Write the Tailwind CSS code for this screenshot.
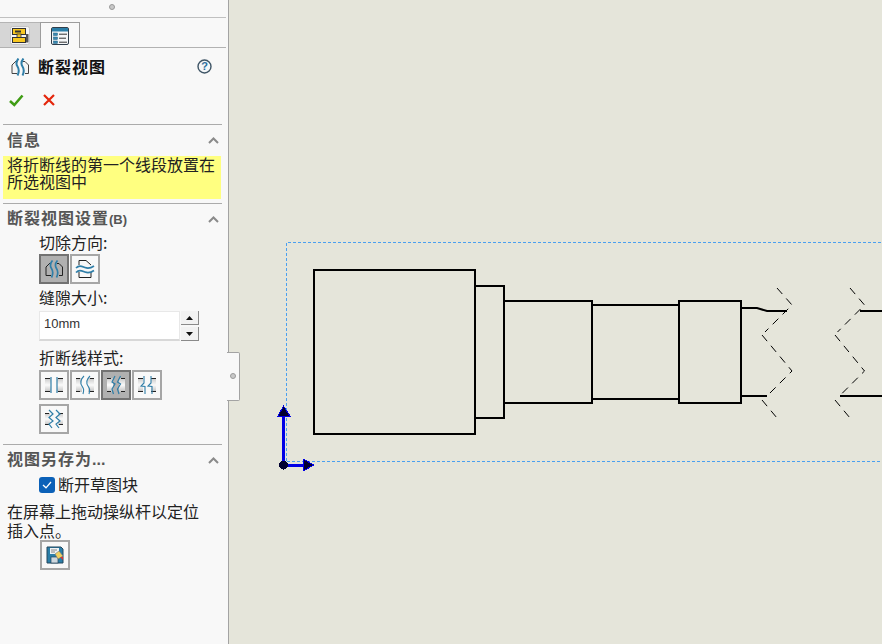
<!DOCTYPE html>
<html lang="zh">
<head>
<meta charset="utf-8">
<script src="https://cdn.jsdelivr.net/npm/@tailwindcss/browser@4"></script>
</head>
<body class="m-0 overflow-hidden">
<div class="flex w-[882px] h-[644px] bg-[#e5e5da] font-['Noto_Sans_CJK_SC','Liberation_Sans',sans-serif] text-[#111] relative overflow-hidden">

  <!-- Property panel -->
  <aside class="w-[229px] h-[644px] shrink-0 bg-[#f8f8f8] border-r border-[#a3a3a3] flex flex-col">
    <div class="h-[18px] shrink-0 mr-[2px] border-b border-[#c0c0c0] flex justify-center pt-[4px]">
      <span class="block w-[6px] h-[6px] rounded-full bg-[#c8c8c8] border border-[#9a9a9a] ml-[-3px]"></span>
    </div>

    <!-- Tabs -->
    <div class="h-[30px] shrink-0 flex items-end mr-[2px] border-b border-[#b2b2b2]">
      <div class="w-[40px] h-[25px] bg-[#d6d6d6] border-t border-[#b4b4b4] flex items-center justify-center">
        <svg width="20" height="19" viewBox="0 0 20 19">
          <rect x="0.5" y="0.5" width="19" height="18" rx="2" fill="#f4f4f4" stroke="#c4c4c4"/>
          <rect x="2.5" y="2.5" width="13" height="6" fill="#f8c820" stroke="#333"/>
          <rect x="7" y="8" width="4" height="4" fill="#f8c820" stroke="#333" stroke-width="0.8"/>
          <rect x="2.5" y="11.5" width="13" height="5" fill="#f8c820" stroke="#333"/>
          <rect x="5" y="4.5" width="6" height="2" fill="#333"/>
          <rect x="16" y="8" width="2.5" height="8.5" fill="#555"/>
        </svg>
      </div>
      <div class="w-[40px] h-[26px] mb-[-1px] bg-[#f8f8f8] border-t border-x border-[#9c9c9c] flex items-center justify-center">
        <svg width="18" height="18" viewBox="0 0 18 18">
          <rect x="0.5" y="0.5" width="17" height="17" rx="1.5" fill="#f4f6f8" stroke="#2f3d4a"/>
          <rect x="1" y="1" width="16" height="3.5" fill="#2a7ea8"/>
          <rect x="2.5" y="6" width="4" height="2.5" fill="#3a88b0" stroke="#1f5f80" stroke-width="0.5"/>
          <rect x="2.5" y="10" width="4" height="2.5" fill="#3a88b0" stroke="#1f5f80" stroke-width="0.5"/>
          <rect x="2.5" y="14" width="4" height="2.5" fill="#3a88b0" stroke="#1f5f80" stroke-width="0.5"/>
          <path d="M8 7.2h8M8 11.2h7M8 15.2h8" stroke="#333" stroke-width="1"/>
        </svg>
      </div>
    </div>

    <!-- Title -->
    <div class="h-[40px] shrink-0 flex items-center pl-[11px] relative">
      <svg width="18" height="18" viewBox="0 0 18 18" class="mt-[-2px]">
        <path d="M5 3 1 7V15.5H6M12 3.5H14L17.5 7V15.5H14" fill="#f4f4f4" stroke="#444" stroke-width="1"/>
        <path d="M7.500 .5Q4 4.500 6.500 8.500T6.500 17.500M12.500 .5Q9 4.500 11.500 8.500T11.500 17.500" fill="none" stroke="#2f7ea8" stroke-width="2"/>
      </svg>
      <span class="ml-[9px] text-[16px] leading-[20px] font-bold tracking-[1px] text-[#111] mt-[-5px]">断裂视图</span>
      <svg width="15" height="15" viewBox="0 0 15 15" class="absolute left-[197px] top-[11px]">
        <circle cx="7.5" cy="7.5" r="6.5" fill="#f4f6f8" stroke="#3f5566" stroke-width="1.4"/>
        <text x="7.5" y="11.4" text-anchor="middle" font-size="11" font-weight="700" font-family="Liberation Sans" fill="#2d6f9e">?</text>
      </svg>
    </div>

    <!-- OK / cancel -->
    <div class="h-[36px] shrink-0 flex items-center">
      <svg width="15" height="13" viewBox="0 0 15 13" class="ml-[9px] mb-[12px]">
        <path d="M1 7 5.3 11 13.5 1.5" fill="none" stroke="#3f9c14" stroke-width="2.6"/>
      </svg>
      <svg width="12" height="12" viewBox="0 0 12 12" class="ml-[19px] mb-[12px]">
        <path d="M1 1 11 11M11 1 1 11" fill="none" stroke="#e4260c" stroke-width="2.2"/>
      </svg>
    </div>

    <!-- Info -->
    <div class="h-[1px] shrink-0 bg-[#ababab] ml-[3px] mr-[6px]"></div>
    <div class="h-[31px] shrink-0 flex items-center justify-between pl-[7px] pr-[9px]">
      <span class="text-[16px] leading-[20px] font-bold tracking-[1px] text-[#555] mb-[4px]">信息</span>
      <svg width="11" height="7" viewBox="0 0 11 7"><path d="M1 6 5.5 1.5 10 6" fill="none" stroke="#8a8a8a" stroke-width="2"/></svg>
    </div>
    <div class="h-[43px] shrink-0 ml-[3px] mr-[7px] bg-[#ffff80] pl-[4px] text-[16px] leading-[17px] text-[#222] whitespace-nowrap">将折断线的第一个线段放置在<br>所选视图中</div>

    <!-- Break settings -->
    <div class="h-[1px] shrink-0 bg-[#ababab] ml-[3px] mr-[6px] mt-[4px]"></div>
    <div class="h-[30px] shrink-0 flex items-center justify-between pl-[7px] pr-[9px]">
      <span class="text-[16px] leading-[20px] font-bold text-[#555] whitespace-nowrap tracking-[1px] mb-[2px]">断裂视图设置<span class="font-['Liberation_Sans'] text-[13px] tracking-normal">(B)</span></span>
      <svg width="11" height="7" viewBox="0 0 11 7"><path d="M1 6 5.5 1.5 10 6" fill="none" stroke="#8a8a8a" stroke-width="2"/></svg>
    </div>
    <div class="pl-[39px] flex flex-col">
      <div class="h-[19px] text-[16px] leading-[17px] text-[#222]">切除方向:</div>
      <div class="flex gap-[1px] mt-[1px]">
        <div class="w-[30px] h-[30px] border-2 border-[#727272] bg-[#b0b0b0] flex items-center justify-center">
          <svg width="20" height="18" viewBox="0 0 20 18">
            <path d="M6 3 2 7V15.5H7M13 3.5H15L18.5 7V15.5H15" fill="none" stroke="#222" stroke-width="1"/>
            <path d="M8.500 .5Q5 4.500 7.500 8.500T7.500 17.500M13.500 .5Q10 4.500 12.500 8.500T12.500 17.500" fill="none" stroke="#2f7ea8" stroke-width="1.7"/>
          </svg>
        </div>
        <div class="w-[30px] h-[30px] border-2 border-[#a6a6a6] bg-[#f8f8f8] flex items-center justify-center">
          <svg width="20" height="20" viewBox="0 0 20 20">
            <path d="M4 6V1.500H11L16 6M4 13V18.500H16V13" fill="none" stroke="#222" stroke-width="1"/>
            <path d="M1 9C4 6 6 7 10 8.500S16 9 19 7M1 13.500C4 10.500 6 11.500 10 13S16 13.500 19 11.500" fill="none" stroke="#2f7ea8" stroke-width="1.7"/>
          </svg>
        </div>
      </div>
      <div class="h-[20px] mt-[4px] text-[16px] leading-[18px] text-[#222]">缝隙大小:</div>
      <div class="flex mt-[3px] h-[30px] gap-[1px]">
        <div class="w-[141px] h-[30px] bg-white border border-[#e8e8e8] border-b-2 border-b-[#d8d8d8] pl-[4px] text-[13px] leading-[24px] font-['Liberation_Sans'] text-[#333]">10mm</div>
        <div class="w-[18px] flex flex-col justify-between">
          <div class="h-[14px] bg-[#f2f2f2] border-b border-r border-[#8a8a8a] flex items-center justify-center">
            <svg width="7" height="4" viewBox="0 0 7 4"><path d="M3.5 0 7 4H0Z" fill="#111"/></svg>
          </div>
          <div class="h-[14px] bg-[#f2f2f2] border-b border-r border-[#8a8a8a] flex items-center justify-center">
            <svg width="7" height="4" viewBox="0 0 7 4"><path d="M0 0H7L3.5 4Z" fill="#111"/></svg>
          </div>
        </div>
      </div>
      <div class="h-[20px] mt-[7px] text-[16px] leading-[18px] text-[#222]">折断线样式:</div>
      <div class="flex mt-[2px] w-[125px] flex-wrap gap-x-[1px] gap-y-[4px]">
        <div class="w-[30px] h-[30px] border-2 border-[#a6a6a6] flex items-center justify-center">
          <svg width="20" height="20" viewBox="0 0 20 20">
            <defs><linearGradient id="g" x1="0" y1="0" x2="0" y2="1"><stop offset="0" stop-color="#c8c8c8"/><stop offset="0.5" stop-color="#fafafa"/><stop offset="1" stop-color="#c0c0c0"/></linearGradient></defs>
            <rect x="1" y="3" width="6" height="14" fill="url(#g)"/><rect x="13" y="3" width="6" height="14" fill="url(#g)"/>
            <path d="M1 3.500H6M14 3.500H19M1 16.500H6M14 16.500H19" stroke="#222" stroke-width="1"/>
            <path d="M7 2V18M13 2V18" stroke="#2f7ea8" stroke-width="1.2"/>
          </svg>
        </div>
        <div class="w-[30px] h-[30px] border-2 border-[#a6a6a6] flex items-center justify-center">
          <svg width="20" height="20" viewBox="0 0 20 20">
            <rect x="1" y="3" width="6" height="14" fill="url(#g)"/><rect x="13" y="3" width="6" height="14" fill="url(#g)"/>
            <path d="M1 3.500H5M15 3.500H19M1 16.500H5M15 16.500H19" stroke="#222" stroke-width="1"/>
            <path d="M9 1C5 5 5 8 7 11S9 15 8 19M15 1C11 5 11 8 13 11S15 15 14 19" fill="none" stroke="#2f7ea8" stroke-width="1.1"/>
          </svg>
        </div>
        <div class="w-[30px] h-[30px] border-2 border-[#727272] bg-[#b0b0b0] flex items-center justify-center">
          <svg width="20" height="20" viewBox="0 0 20 20">
            <rect x="1" y="3" width="6" height="14" fill="url(#g)"/><rect x="13" y="3" width="6" height="14" fill="url(#g)"/>
            <path d="M1 3.500H5M15 3.500H19M1 16.500H5M15 16.500H19" stroke="#222" stroke-width="1"/>
            <path d="M9 1 6 7 9 9 6 14 7.500 19M14.500 1 11.500 7 14.500 9 11.500 14 13 19" fill="none" stroke="#2f7ea8" stroke-width="1.2"/>
          </svg>
        </div>
        <div class="w-[30px] h-[30px] border-2 border-[#a6a6a6] flex items-center justify-center">
          <svg width="20" height="20" viewBox="0 0 20 20">
            <rect x="1" y="3" width="5" height="14" fill="url(#g)"/><rect x="14" y="3" width="5" height="14" fill="url(#g)"/>
            <path d="M1 3.500H6M14 3.500H19M1 16.500H6M14 16.500H19" stroke="#222" stroke-width="1"/>
            <path d="M7 1V8L4 11 8 11.500V19M14 1V8L11 11 15 11.500V19" fill="none" stroke="#2f7ea8" stroke-width="1.1"/>
          </svg>
        </div>
        <div class="w-[30px] h-[30px] border-2 border-[#a6a6a6] flex items-center justify-center">
          <svg width="20" height="20" viewBox="0 0 20 20">
            <rect x="1" y="4" width="5" height="12" fill="url(#g)"/><rect x="14" y="4" width="5" height="12" fill="url(#g)"/>
            <path d="M1 4.500H5M15 4.500H19M1 15.500H5M15 15.500H19" stroke="#222" stroke-width="1"/>
            <path d="M5 1 9 5 5 8.500 9 12 5 15 8 19M12 1 16 5 12 8.500 16 12 12 15 15 19" fill="none" stroke="#2f7ea8" stroke-width="1.2"/>
          </svg>
        </div>
      </div>
    </div>

    <!-- Save view as -->
    <div class="h-[1px] shrink-0 bg-[#ababab] ml-[3px] mr-[6px] mt-[10px]"></div>
    <div class="h-[30px] shrink-0 flex items-center justify-between pl-[7px] pr-[9px]">
      <span class="text-[16px] leading-[20px] font-bold text-[#555] whitespace-nowrap tracking-[1px] mb-[2px]">视图另存为<span class="font-['Liberation_Sans'] tracking-normal">...</span></span>
      <svg width="11" height="7" viewBox="0 0 11 7"><path d="M1 6 5.5 1.5 10 6" fill="none" stroke="#8a8a8a" stroke-width="2"/></svg>
    </div>
    <div class="h-[21px] shrink-0 flex items-center pl-[39px]">
      <span class="w-[16px] h-[16px] rounded-[3px] bg-[#0b61b8] flex items-center justify-center mt-[-2px]">
        <svg width="10" height="8" viewBox="0 0 10 8"><path d="M1 4 4 6.800 9 1" fill="none" stroke="#fff" stroke-width="1.3"/></svg>
      </span>
      <span class="ml-[3px] text-[16px] leading-[20px] text-[#222] mt-[-3px]">断开草图块</span>
    </div>
    <div class="mt-[6px] pl-[7px] text-[16px] leading-[19px] text-[#222] whitespace-nowrap">在屏幕上拖动操纵杆以定位<br>插入点。</div>
    <div class="w-[30px] h-[30px] ml-[40px] border-2 border-[#a6a6a6] flex items-center justify-center">
      <svg width="18" height="18" viewBox="0 0 18 18">
        <path d="M1 1H15L17 3V17H1Z" fill="#2a7ea8" stroke="#24465c"/>
        <rect x="4" y="2" width="9" height="6" fill="#eef3f6"/>
        <path d="M5 4H11M5 6H9" stroke="#888" stroke-width="1"/>
        <rect x="5" y="11" width="7" height="6" fill="#cfd8de" stroke="#24465c" stroke-width="0.7"/>
        <path d="M9 8 13 5 17 10 12 13Z" fill="#f0d060" stroke="#777" stroke-width="0.6"/>
        <path d="M14 11 17 14 17 11Z" fill="#e03030"/>
      </svg>
    </div>
  </aside>

  <!-- Panel sash handle -->
  <div class="absolute left-[227px] top-[352px] w-[13px] h-[49px] bg-[#f8f8f8] border border-l-0 border-[#a3a3a3] rounded-r-[2px]">
    <span class="absolute left-[3px] top-[20px] block w-[6px] h-[6px] rounded-full bg-[#c8c8c8] border border-[#9a9a9a]"></span>
  </div>

  <!-- Drawing canvas -->
  <svg class="absolute left-0 top-0 pointer-events-none" width="882" height="644" viewBox="0 0 882 644" shape-rendering="crispEdges">
    <!-- view boundary -->
    <path d="M286.500 461V242.500H882" fill="none" stroke="#4aa0f0" stroke-width="1" stroke-dasharray="3 2"/>
    <path d="M286.500 461.500H882" fill="none" stroke="#4aa0f0" stroke-width="1" stroke-dasharray="3 2"/>
    <!-- shaft -->
    <g fill="none" stroke="#000" stroke-width="2">
      <rect x="314" y="270" width="161" height="164"/>
      <path d="M475 286H504V418H475"/>
      <path d="M504 301H592V403H504"/>
      <path d="M592 305H679M592 399H679"/>
      <path d="M592 301V403"/>
      <rect x="679" y="301" width="62" height="102"/>
      <path d="M741 308H757L767 311H787" shape-rendering="auto"/>
      <path d="M741 396H767"/>
      <path d="M860 311H882M840 396H882"/>
    </g>
    <!-- break lines -->
    <g fill="none" stroke="#000" stroke-width="1" stroke-dasharray="8 6" shape-rendering="auto">
      <path d="M777 288 792 305 765 332"/>
      <path d="M762 335 792 371 767 396"/>
      <path d="M762 400 777 418"/>
      <path d="M850 288 864.500 305 837.500 332"/>
      <path d="M835 335 864.500 371 839.500 396"/>
      <path d="M835 400 850 418"/>
    </g>
    <!-- triad -->
    <path d="M283.500 465V414" stroke="#0000e6" stroke-width="3" fill="none"/>
    <path d="M283.500 465H304" stroke="#0000e6" stroke-width="3" fill="none"/>
    <path d="M283.500 406 278 416H290Z" fill="#000030" stroke="#0000e6" stroke-width="1"/>
    <path d="M314 465 303 459V471Z" fill="#000030" stroke="#0000e6" stroke-width="1"/>
    <circle cx="283.500" cy="465" r="4.500" fill="#000030"/>
  </svg>
</div>
</body>
</html>
